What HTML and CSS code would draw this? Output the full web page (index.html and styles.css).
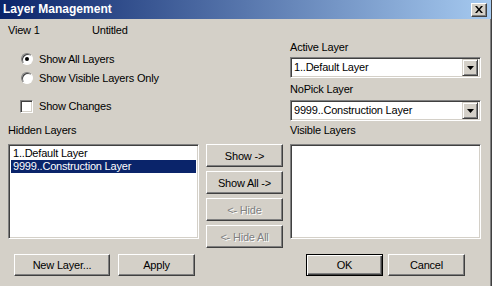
FILE: index.html
```html
<!DOCTYPE html>
<html lang="en">
<head>
  <meta charset="UTF-8"/>
  <title>Layer Management</title>
  <link rel="stylesheet" href="styles.css">
</head>
<body>
  <div class="window">
    <div class="titlebar">
      <span class="title">Layer Management</span>
      <span class="close">
        <svg width="8" height="7" viewBox="0 0 8 7"><path d="M0 0h2l2 2.5 2-2.5h2l-3 3.5 3 3.5h-2l-2-2.5-2 2.5h-2l3-3.5z" fill="#000"/></svg>
      </span>
    </div>

    <div class="content">
      <div class="info">
        <span class="view">View 1</span>
        <span>Untitled</span>
      </div>

      <div class="top">
        <div class="options">
          <div class="option"><span class="radio checked"></span>Show All Layers</div>
          <div class="option"><span class="radio"></span>Show Visible Layers Only</div>
          <div class="option check"><span class="checkbox"></span>Show Changes</div>
        </div>
        <div class="selects">
          <div class="label">Active Layer</div>
          <div class="combo">
            <span class="combo-text">1..Default Layer</span>
            <span class="combo-btn"><svg width="7" height="4" viewBox="0 0 7 4"><path d="M0 0h7l-3.5 4z" fill="#000"/></svg></span>
          </div>
          <div class="label second">NoPick Layer</div>
          <div class="combo second">
            <span class="combo-text">9999..Construction Layer</span>
            <span class="combo-btn"><svg width="7" height="4" viewBox="0 0 7 4"><path d="M0 0h7l-3.5 4z" fill="#000"/></svg></span>
          </div>
        </div>
      </div>

      <div class="lists">
        <div class="label">Hidden Layers</div>
        <div></div>
        <div class="label">Visible Layers</div>

        <div class="listbox">
          <div class="item">1..Default Layer</div>
          <div class="item selected">9999..Construction Layer</div>
        </div>
        <div class="move-buttons">
          <div class="btn">Show -&gt;</div>
          <div class="btn">Show All -&gt;</div>
          <div class="btn disabled">&lt;- Hide</div>
          <div class="btn disabled">&lt;- Hide All</div>
        </div>
        <div class="listbox"></div>
      </div>

      <div class="footer">
        <div class="group left">
          <div class="btn wide">New Layer...</div>
          <div class="btn">Apply</div>
        </div>
        <div class="group right">
          <div class="btn default">OK</div>
          <div class="btn">Cancel</div>
        </div>
      </div>
    </div>
  </div>
</body>
</html>
```

FILE: styles.css
```css
body {
  margin: 0;
  padding: 0;
  background-color: #d4d0c8;
  font-family: "Liberation Sans", Arial, sans-serif;
  font-size: 11px;
  letter-spacing: -0.2px;
  color: #000000;
}

.window {
  width: 492px;
  height: 286px;
  box-sizing: border-box;
  background-color: #d4d0c8;
  border-right: 1px solid #404040;
  box-shadow: inset -1px 0 #808080;
  overflow: hidden;
}

.titlebar {
  height: 19px;
  display: flex;
  align-items: center;
  justify-content: space-between;
  padding: 0 4px 0 3px;
  background: linear-gradient(to right, #0a246a, #a6caf0);
}

.title {
  color: #ffffff;
  font-weight: bold;
  font-size: 12px;
  letter-spacing: 0;
  line-height: 19px;
}

.close {
  width: 16px;
  height: 14px;
  box-sizing: border-box;
  display: flex;
  align-items: center;
  justify-content: center;
  background-color: #d4d0c8;
  border: 1px solid;
  border-color: #ffffff #404040 #404040 #ffffff;
  box-shadow: inset -1px -1px #808080;
}

.content {
  padding: 5px 0 0 8px;
}

.info {
  display: flex;
  line-height: 13px;
  height: 13px;
}

.view {
  width: 84px;
}

.top {
  display: flex;
  margin-top: 4px;
}

.options {
  width: 282px;
  padding: 11px 0 0 12px;
  box-sizing: border-box;
}

.option {
  display: flex;
  align-items: center;
  height: 14px;
  margin-bottom: 5px;
}

.option.check {
  margin-top: 14px;
}

.radio {
  width: 12px;
  height: 12px;
  box-sizing: border-box;
  margin: 0 6px 0 1px;
  border-radius: 50%;
  border: 1px solid;
  border-color: #808080 #ffffff #ffffff #808080;
  background-color: #ffffff;
  box-shadow: inset 1px 1px #404040;
  position: relative;
}

.radio.checked::after {
  content: "";
  position: absolute;
  left: 3px;
  top: 3px;
  width: 4px;
  height: 4px;
  border-radius: 50%;
  background-color: #000000;
}

.checkbox {
  width: 13px;
  height: 13px;
  box-sizing: border-box;
  margin-right: 6px;
  border: 1px solid;
  border-color: #808080 #ffffff #ffffff #808080;
  background-color: #ffffff;
  box-shadow: inset 1px 1px #404040, inset -1px -1px #d4d0c8;
}

.selects {
  width: 191px;
}

.label {
  line-height: 13px;
  height: 13px;
}

.label.second {
  margin-top: 5px;
}

.combo {
  height: 21px;
  margin-top: 3px;
  box-sizing: border-box;
  display: flex;
  align-items: center;
  justify-content: space-between;
  padding: 2px;
  background-color: #ffffff;
  border: 1px solid;
  border-color: #808080 #ffffff #ffffff #808080;
  box-shadow: inset 1px 1px #404040, inset -1px -1px #d4d0c8;
}

.combo.second {
  margin-top: 4px;
}

.combo-text {
  padding-left: 1px;
  line-height: 13px;
}

.combo-btn {
  width: 16px;
  height: 17px;
  box-sizing: border-box;
  display: flex;
  align-items: center;
  justify-content: center;
  background-color: #d4d0c8;
  border: 1px solid;
  border-color: #d4d0c8 #404040 #404040 #d4d0c8;
  box-shadow: inset 1px 1px #ffffff, inset -1px -1px #808080;
}

.lists {
  display: grid;
  grid-template-columns: 191px 77px 191px;
  column-gap: 7px;
  row-gap: 7px;
  margin-top: 3px;
}

.listbox {
  height: 95px;
  box-sizing: border-box;
  padding: 2px;
  background-color: #ffffff;
  border: 1px solid;
  border-color: #808080 #ffffff #ffffff #808080;
  box-shadow: inset 1px 1px #404040, inset -1px -1px #d4d0c8;
}

.item {
  line-height: 13px;
  height: 13px;
  padding-left: 2px;
  white-space: nowrap;
}

.item.selected {
  background-color: #0a246a;
  color: #ffffff;
}

.move-buttons {
  display: flex;
  flex-direction: column;
  gap: 4px;
}

.btn {
  width: 77px;
  height: 23px;
  box-sizing: border-box;
  display: flex;
  align-items: center;
  justify-content: center;
  background-color: #d4d0c8;
  border: 1px solid;
  border-color: #ffffff #404040 #404040 #ffffff;
  box-shadow: inset -1px -1px #808080;
}

.btn.disabled {
  color: #808080;
  text-shadow: 1px 1px 0 #ffffff;
}

.btn.wide {
  width: 96px;
}

.btn.default {
  border: 1px solid #000000;
  box-shadow: inset 1px 1px #ffffff, inset -1px -1px #404040, inset -2px -2px #808080;
}

.footer {
  display: flex;
  justify-content: space-between;
  margin-top: 6px;
  padding: 0 16px 0 6px;
  width: 473px;
  box-sizing: border-box;
}

.group {
  display: flex;
}

.group.left {
  gap: 8px;
}

.group.right {
  gap: 5px;
}

.footer .btn {
  height: 22px;
}
```
